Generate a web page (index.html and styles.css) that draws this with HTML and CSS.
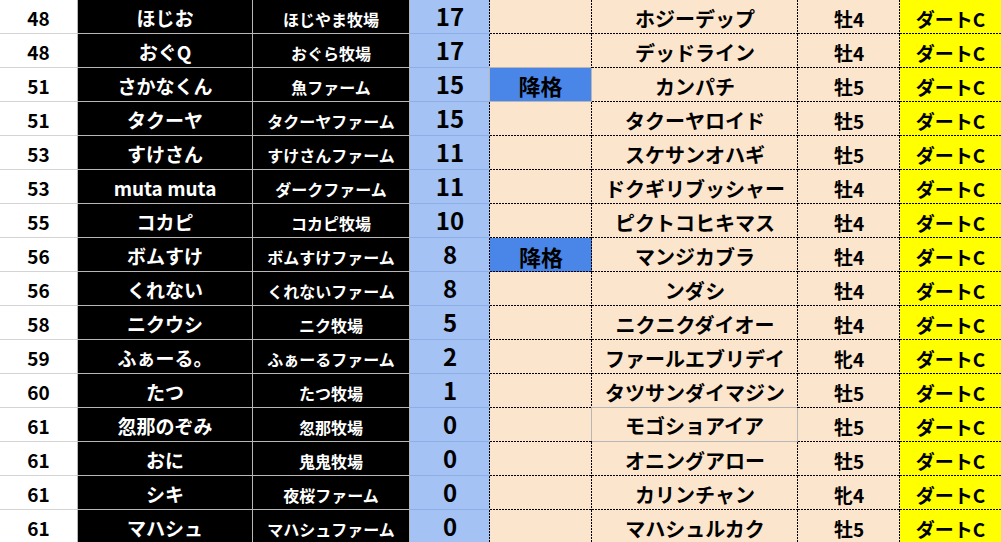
FILE: index.html
```html
<!DOCTYPE html>
<html lang="ja">
<head>
<meta charset="utf-8">
<title>ランキング</title>
<link rel="stylesheet" href="styles.css">
</head>
<body>
<div class="sheet">
  <div class="c rank">48</div><div class="c name">ほじお</div><div class="c farm">ほじやま牧場</div><div class="c pts">17</div><div class="c dem"></div><div class="c horse">ホジーデップ</div><div class="c sex">牡4</div><div class="c cls">ダートC</div>
  <div class="c rank">48</div><div class="c name">おぐQ</div><div class="c farm">おぐら牧場</div><div class="c pts">17</div><div class="c dem"></div><div class="c horse">デッドライン</div><div class="c sex">牡4</div><div class="c cls">ダートC</div>
  <div class="c rank">51</div><div class="c name">さかなくん</div><div class="c farm">魚ファーム</div><div class="c pts">15</div><div class="c dem on solid">降格</div><div class="c horse">カンパチ</div><div class="c sex">牡5</div><div class="c cls">ダートC</div>
  <div class="c rank">51</div><div class="c name">タクーヤ</div><div class="c farm">タクーヤファーム</div><div class="c pts">15</div><div class="c dem"></div><div class="c horse">タクーヤロイド</div><div class="c sex">牡5</div><div class="c cls">ダートC</div>
  <div class="c rank">53</div><div class="c name">すけさん</div><div class="c farm">すけさんファーム</div><div class="c pts">11</div><div class="c dem"></div><div class="c horse">スケサンオハギ</div><div class="c sex">牡5</div><div class="c cls">ダートC</div>
  <div class="c rank">53</div><div class="c name">muta muta</div><div class="c farm">ダークファーム</div><div class="c pts">11</div><div class="c dem"></div><div class="c horse">ドクギリブッシャー</div><div class="c sex">牡4</div><div class="c cls">ダートC</div>
  <div class="c rank">55</div><div class="c name">コカピ</div><div class="c farm">コカピ牧場</div><div class="c pts">10</div><div class="c dem"></div><div class="c horse">ピクトコヒキマス</div><div class="c sex">牡4</div><div class="c cls">ダートC</div>
  <div class="c rank">56</div><div class="c name">ボムすけ</div><div class="c farm">ボムすけファーム</div><div class="c pts">8</div><div class="c dem on">降格</div><div class="c horse">マンジカブラ</div><div class="c sex">牡4</div><div class="c cls">ダートC</div>
  <div class="c rank">56</div><div class="c name">くれない</div><div class="c farm">くれないファーム</div><div class="c pts">8</div><div class="c dem"></div><div class="c horse">ンダシ</div><div class="c sex">牡4</div><div class="c cls">ダートC</div>
  <div class="c rank">58</div><div class="c name">ニクウシ</div><div class="c farm">ニク牧場</div><div class="c pts">5</div><div class="c dem"></div><div class="c horse">ニクニクダイオー</div><div class="c sex">牡4</div><div class="c cls">ダートC</div>
  <div class="c rank">59</div><div class="c name">ふぁーる。</div><div class="c farm">ふぁーるファーム</div><div class="c pts">2</div><div class="c dem"></div><div class="c horse">ファールエブリデイ</div><div class="c sex">牝4</div><div class="c cls">ダートC</div>
  <div class="c rank">60</div><div class="c name">たつ</div><div class="c farm">たつ牧場</div><div class="c pts">1</div><div class="c dem"></div><div class="c horse">タツサンダイマジン</div><div class="c sex">牡5</div><div class="c cls">ダートC</div>
  <div class="c rank">61</div><div class="c name">忽那のぞみ</div><div class="c farm">忽那牧場</div><div class="c pts">0</div><div class="c dem"></div><div class="c horse solid">モゴショアイア</div><div class="c sex">牡5</div><div class="c cls">ダートC</div>
  <div class="c rank">61</div><div class="c name">おに</div><div class="c farm">鬼鬼牧場</div><div class="c pts">0</div><div class="c dem"></div><div class="c horse">オニングアロー</div><div class="c sex">牡5</div><div class="c cls">ダートC</div>
  <div class="c rank">61</div><div class="c name">シキ</div><div class="c farm">夜桜ファーム</div><div class="c pts">0</div><div class="c dem"></div><div class="c horse">カリンチャン</div><div class="c sex">牝4</div><div class="c cls">ダートC</div>
  <div class="c rank">61</div><div class="c name">マハシュ</div><div class="c farm">マハシュファーム</div><div class="c pts">0</div><div class="c dem"></div><div class="c horse">マハシュルカク</div><div class="c sex">牡5</div><div class="c cls">ダートC</div>
</div>
</body>
</html>
```
FILE: styles.css
```css
html, body {
  margin: 0;
  padding: 0;
  background: #ffffff;
  overflow: hidden;
}

.sheet {
  --dot-h: repeating-linear-gradient(to right, #000 0 2px, transparent 2px 3px);
  --dot-v: repeating-linear-gradient(to bottom, #000 0 2px, transparent 2px 3px);
  display: grid;
  grid-template-columns: 78px 175px 157px 80px 102px 206px 102px 101px;
  grid-auto-rows: 34px;
  width: 1001px;
  font-family: "Noto Sans CJK JP", "Noto Sans", sans-serif;
  font-weight: 700;
  color: #000;
}

.c {
  box-sizing: border-box;
  display: flex;
  align-items: flex-end;
  justify-content: center;
  padding-bottom: 4px;
  line-height: 1.1;
  white-space: nowrap;
}

.rank {
  background: #ffffff;
  border-right: 1px solid #b7b7b7;
  border-bottom: 1px solid #d4d4d4;
  font-size: 19px;
}

.name,
.farm {
  background: #000000;
  color: #ffffff;
  border-right: 1px solid #b7b7b7;
  border-bottom: 1px solid #b7b7b7;
}

.name { font-size: 19px; }
.farm { font-size: 16px; }

.pts {
  background-color: #a4c2f4;
  background-image: var(--dot-v);
  background-position: right top;
  background-size: 1px 100%;
  background-repeat: no-repeat;
  border-bottom: 1px solid #8eaee6;
  font-size: 24px;
  line-height: 1;
  padding-bottom: 5px;
}

.dem,
.horse,
.sex,
.cls {
  background-color: #fce5cd;
  background-image: var(--dot-h), var(--dot-v);
  background-position: left bottom, right top;
  background-size: 100% 1px, 1px 100%;
  background-repeat: no-repeat;
}

.dem { font-size: 22px; padding-bottom: 5px; line-height: 1; }
.dem.on { background-color: #4a86e8; }
.horse { font-size: 20px; }
.sex { font-size: 19px; }

.cls {
  background-color: #ffff00;
  background-image: var(--dot-h);
  background-position: left bottom;
  background-size: 100% 1px;
  font-size: 19px;
}

.solid {
  background-image: none;
  border-right: 1px solid #b7b7b7;
  border-bottom: 1px solid #b7b7b7;
  box-shadow: -1px -1px 0 0 #b7b7b7;
}
```
